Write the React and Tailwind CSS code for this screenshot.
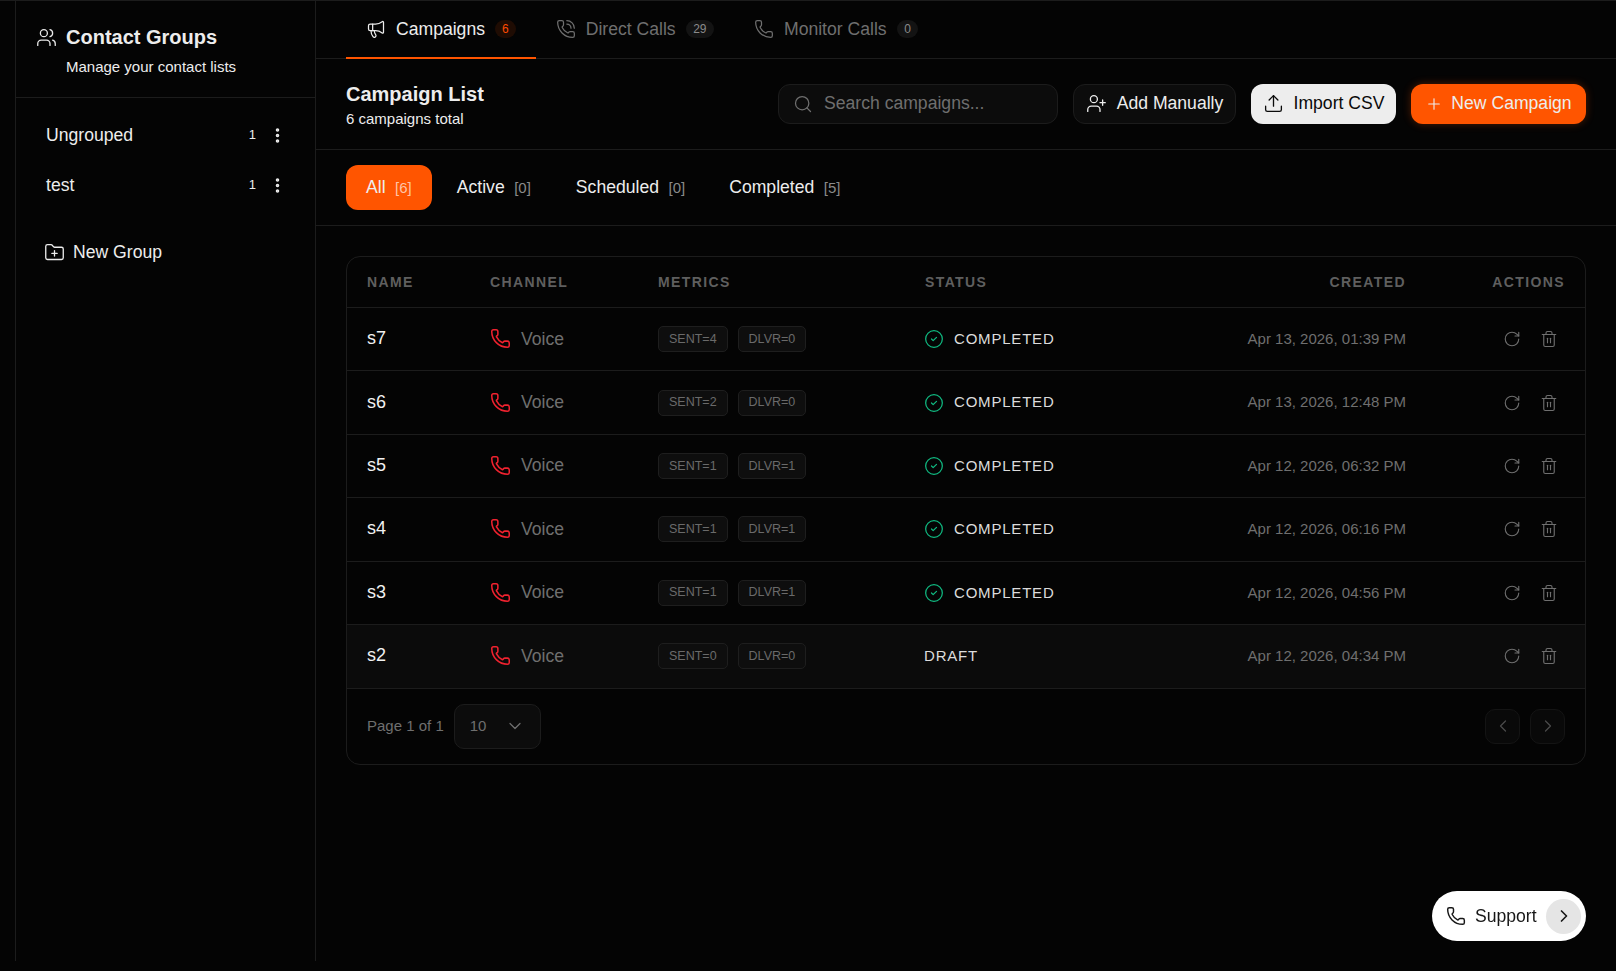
import { Users, Megaphone, PhoneCall, Phone, Search, UserPlus, Upload, Plus, EllipsisVertical, FolderPlus, CircleCheck, RotateCw, Trash2, ChevronDown, ChevronLeft, ChevronRight } from 'lucide-react';

const font = "font-['Liberation_Sans',Arial,sans-serif]";

const rows = [
  { name: 's7', sent: 4, dlvr: 0, status: 'COMPLETED', created: 'Apr 13, 2026, 01:39 PM' },
  { name: 's6', sent: 2, dlvr: 0, status: 'COMPLETED', created: 'Apr 13, 2026, 12:48 PM' },
  { name: 's5', sent: 1, dlvr: 1, status: 'COMPLETED', created: 'Apr 12, 2026, 06:32 PM' },
  { name: 's4', sent: 1, dlvr: 1, status: 'COMPLETED', created: 'Apr 12, 2026, 06:16 PM' },
  { name: 's3', sent: 1, dlvr: 1, status: 'COMPLETED', created: 'Apr 12, 2026, 04:56 PM' },
  { name: 's2', sent: 0, dlvr: 0, status: 'DRAFT', created: 'Apr 12, 2026, 04:34 PM' },
];

function Sidebar() {
  return (
    <aside className="w-[301px] shrink-0 ml-[15px] h-[960px] border-x border-[#1c1c1c]">
      <div className="h-[97px] border-b border-[#1c1c1c] pl-[20px] pt-[22px]">
        <div className="flex items-center gap-[9px]">
          <Users size={21} strokeWidth={1.5} className="text-[#e8e8e8]" />
          <h2 className="text-[20px] leading-[28px] font-bold text-[#ededed]">Contact Groups</h2>
        </div>
        <p className="ml-[30px] mt-[6px] text-[15px] leading-[20px] text-[#ededed]">Manage your contact lists</p>
      </div>
      <div className="pt-[12px] pl-[30px] pr-[28px]">
        {[['Ungrouped', 1], ['test', 1]].map(([label, n]) => (
          <div key={label} className="h-[50px] flex items-center justify-between text-[#ededed]">
            <span className="text-[17.6px]">{label}</span>
            <span className="flex items-center gap-[12px]">
              <span className="text-[13px]">{n}</span>
              <EllipsisVertical size={19} strokeWidth={2.5} />
            </span>
          </div>
        ))}
        <div className="mt-[28px] flex items-center gap-[8px] text-[#ededed]">
          <FolderPlus size={21} strokeWidth={1.5} className="-ml-[2px]" />
          <span className="text-[17.6px] leading-[28px]">New Group</span>
        </div>
      </div>
    </aside>
  );
}

function Tab({ icon: Icon, label, count, active }) {
  return (
    <div className={`h-[58px] -mb-px flex items-center gap-[10px] border-b-2 px-[20px] ${active ? 'border-[#ff5500] text-[#ededed]' : 'border-transparent text-[#6f6f6f]'}`}>
      <Icon size={20} strokeWidth={1.5} />
      <span className="text-[17.6px]">{label}</span>
      <span className={`h-[18px] rounded-full flex items-center justify-center text-[12px] ${active ? 'px-[7px] bg-[#1f0c03] text-[#ff4a00]' : 'px-[7.5px] bg-[#131313] text-[#8a8a8a]'}`}>{count}</span>
    </div>
  );
}

function Filter({ label, count, active }) {
  return (
    <div className={`h-[45px] rounded-[12px] flex items-center gap-[9.5px] ${active ? 'bg-[#ff5500] px-[20px]' : 'px-[24px]'}`}>
      <span className="text-[17.6px] text-[#ededed]">{label}</span>
      <span className={`text-[15px] mt-[2px] ${active ? 'text-[#ffc4a6]' : 'text-[#8a8a8a]'}`}>[{count}]</span>
    </div>
  );
}

function Chip({ children }) {
  return <span className="h-[26px] w-fit px-[10px] flex items-center rounded-[5px] border border-[#1e1e1e] bg-[#0e0e0e] text-[12.5px] text-[#6a6a6a]">{children}</span>;
}

const gridCols = 'grid grid-cols-[123px_168px_267px_1fr_160px_159px] items-center px-[20px]';

export default function App() {
  return (
    <div className={`${font} w-full min-h-screen bg-[#040404] border-t border-[#1c1c1c] flex overflow-hidden`}>
      <Sidebar />
      <main className="flex-1 min-w-0">
        <div className="h-[58px] border-b border-[#1c1c1c] pl-[30px] flex">
          <Tab icon={Megaphone} label="Campaigns" count="6" active />
          <Tab icon={PhoneCall} label="Direct Calls" count="29" />
          <Tab icon={Phone} label="Monitor Calls" count="0" />
        </div>
        <div className="h-[91px] border-b border-[#1c1c1c] pl-[30px] pr-[30px] flex items-center justify-between">
          <div>
            <h1 className="text-[20px] leading-[28px] font-bold text-[#ededed]">Campaign List</h1>
            <p className="mt-[1px] text-[15px] leading-[20px] text-[#ededed]">6 campaigns total</p>
          </div>
          <div className="flex items-center gap-[15px]">
            <div className="w-[280px] h-[40px] rounded-[12px] border border-[#1c1c1c] bg-[#0c0c0c] flex items-center gap-[11px] px-[14px] pb-[1px] text-[#6f6f6f]">
              <Search size={20} strokeWidth={1.5} />
              <span className="text-[17.6px]">Search campaigns...</span>
            </div>
            <button className="h-[40px] w-[163px] rounded-[12px] border border-[#1c1c1c] bg-[#0c0c0c] flex items-center justify-center gap-[10px] pb-[1px] text-[#ededed]">
              <UserPlus size={21} strokeWidth={1.5} />
              <span className="text-[17.6px]">Add Manually</span>
            </button>
            <button className="h-[40px] w-[145px] rounded-[12px] bg-[#ededed] flex items-center justify-center gap-[10px] pb-[1px] text-[#0a0a0a]">
              <Upload size={21} strokeWidth={1.5} />
              <span className="text-[17.6px]">Import CSV</span>
            </button>
            <button className="h-[40px] w-[175px] rounded-[12px] bg-[#ff5500] flex items-center justify-center gap-[8px] pb-[1px] text-[#ededed] shadow-[0_0_8px_rgba(255,85,0,0.3)]">
              <Plus size={18} strokeWidth={1.5} />
              <span className="text-[17.6px]">New Campaign</span>
            </button>
          </div>
        </div>
        <div className="h-[76px] border-b border-[#1c1c1c] pl-[30px] flex items-center">
          <Filter label="All" count="6" active />
          <div className="ml-[1px]"><Filter label="Active" count="0" /></div>
          <div className="-ml-[3px]"><Filter label="Scheduled" count="0" /></div>
          <div className="-ml-[4px]"><Filter label="Completed" count="5" /></div>
        </div>
        <div className="mt-[30px] mx-[30px] rounded-[14px] border border-[#1c1c1c]">
          <div className={`${gridCols} h-[51px] border-b border-[#1c1c1c] text-[14px] font-bold tracking-[1.4px] text-[#5f5f5f]`}>
            <span>NAME</span>
            <span>CHANNEL</span>
            <span>METRICS</span>
            <span>STATUS</span>
            <span className="text-right">CREATED</span>
            <span className="text-right">ACTIONS</span>
          </div>
          {rows.map((r) => (
            <div key={r.name} className={`${gridCols} border-b border-[#1c1c1c] ${r.status === 'DRAFT' ? 'h-[64px] bg-[#0b0b0b]' : 'h-[63.4px]'}`}>
              <span className="text-[18px] font-medium text-[#f2f2f2] pb-[1px]">{r.name}</span>
              <span className="flex items-center gap-[10px] text-[17.6px] text-[#6f6f6f] pb-[1px]">
                <Phone size={21} strokeWidth={1.75} className="text-[#f0222f]" />
                Voice
              </span>
              <span className="flex items-center gap-[10px]">
                <Chip>SENT={r.sent}</Chip>
                <Chip>DLVR={r.dlvr}</Chip>
              </span>
              {r.status === 'COMPLETED' ? (
                <span className="flex items-center gap-[10px] text-[15px] tracking-[0.8px] text-[#dcdcdc]">
                  <CircleCheck size={20} strokeWidth={1.5} className="text-[#10b981] -ml-[1px]" />
                  {r.status}
                </span>
              ) : (
                <span className="text-[15px] tracking-[0.8px] text-[#dcdcdc] -ml-[1px]">{r.status}</span>
              )}
              <span className="text-right text-[15px] text-[#6f6f6f] whitespace-nowrap">{r.created}</span>
              <span className="flex items-center justify-end gap-[18.5px] pr-[7.5px] text-[#6f6f6f]">
                <RotateCw size={18} strokeWidth={1.5} />
                <Trash2 size={18} strokeWidth={1.5} />
              </span>
            </div>
          ))}
          <div className="h-[75px] pl-[20px] pr-[20px] flex items-center justify-between">
            <div className="flex items-center gap-[10px]">
              <span className="text-[15px] text-[#6f6f6f]">Page 1 of 1</span>
              <div className="h-[45px] w-[87px] rounded-[10px] border border-[#1c1c1c] bg-[#0c0c0c] flex items-center justify-between pl-[15px] pr-[15px] text-[#6f6f6f]">
                <span className="text-[15px]">10</span>
                <ChevronDown size={20} strokeWidth={1.5} />
              </div>
            </div>
            <div className="flex items-center gap-[10px]">
              <button className="size-[35px] rounded-[10px] border border-[#141414] bg-[#090909] flex items-center justify-center text-[#4a4a4a]"><ChevronLeft size={20} strokeWidth={1.5} /></button>
              <button className="size-[35px] rounded-[10px] border border-[#141414] bg-[#090909] flex items-center justify-center text-[#4a4a4a]"><ChevronRight size={20} strokeWidth={1.5} /></button>
            </div>
          </div>
        </div>
      </main>
      <div className="fixed right-[30px] bottom-[30px] h-[50px] w-[154px] rounded-full bg-white flex items-center pl-[14px] pr-[5px] text-[#171717]">
        <Phone size={20} strokeWidth={1.75} />
        <span className="ml-[9px] text-[17.6px]">Support</span>
        <span className="ml-auto size-[35px] rounded-full bg-[#e5e5e5] flex items-center justify-center"><ChevronRight size={20} strokeWidth={2} /></span>
      </div>
    </div>
  );
}
